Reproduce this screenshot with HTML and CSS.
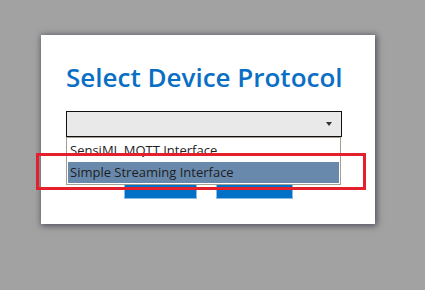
FILE: index.html
```html
<!DOCTYPE html>
<html>
<head>
<meta charset="utf-8">
<link rel="stylesheet" href="styles.css">
</head>
<body>
<div class="dialog">
  <h1 class="title">Select Device Protocol</h1>
  <div class="field">
    <div class="select"><span class="arrow"></span></div>
    <ul class="listbox">
      <li class="option">SensiML MQTT Interface</li>
      <li class="option selected">Simple Streaming Interface</li>
    </ul>
  </div>
  <div class="buttons">
    <button class="btn btn-ok">Select</button>
    <button class="btn btn-cancel">Cancel</button>
  </div>
</div>
<div class="highlight-box"></div>
</body>
</html>
```
FILE: styles.css
```css
html, body {
  margin: 0;
  padding: 0;
}
body {
  background: #a2a2a2;
  width: 425px;
  height: 290px;
  overflow: hidden;
  position: relative;
  font-family: "Open Sans", "Noto Sans", sans-serif;
}
.dialog {
  margin: 35px 0 0 41px;
  width: 334px;
  height: 189px;
  background: #ffffff;
  box-shadow: 1px 1px 6px 1px rgba(40, 40, 60, 0.65);
  box-sizing: border-box;
  padding: 24px 0 0 25px;
}
.title {
  margin: 0;
  font-size: 26px;
  font-weight: 600;
  line-height: 36px;
  color: #0a6fc4;
  white-space: nowrap;
}
.field {
  position: relative;
  margin-top: 16px;
  width: 276px;
}
.select {
  height: 26px;
  box-sizing: border-box;
  border: 1px solid #111;
  background: #e9e9e9;
  position: relative;
}
.arrow {
  position: absolute;
  right: 9px;
  top: 10px;
  width: 0;
  height: 0;
  border-left: 3.5px solid transparent;
  border-right: 3.5px solid transparent;
  border-top: 4px solid #333;
}
.listbox {
  position: absolute;
  left: 0;
  top: 26px;
  width: 275px;
  height: 48px;
  margin: 0;
  padding: 1px;
  box-sizing: border-box;
  list-style: none;
  background: #fff;
  border: 1px solid #a39d92;
  z-index: 2;
}
.option {
  height: 22px;
  line-height: 22px;
  font-size: 13px;
  color: #1e1e1e;
  padding-left: 2px;
  white-space: nowrap;
}
.option:first-child {
  height: 23px;
  line-height: 22px;
}
.option.selected {
  background: #6889ac;
  height: 21px;
  line-height: 21px;
}
.buttons {
  display: flex;
  justify-content: center;
  gap: 19px;
  margin-top: 32px;
  padding-right: 25px;
}
.btn {
  height: 30px;
  border: 1px solid #8cbbe6;
  background: #0071c6;
  color: #fff;
  font-family: "Open Sans", sans-serif;
  font-size: 13px;
  line-height: 20px;
  padding: 0 0 8px 0;
  display: flex;
  align-items: flex-start;
  justify-content: center;
}
.btn-ok { width: 73px; }
.btn-cancel { width: 77px; }
.highlight-box {
  position: absolute;
  left: 36px;
  top: 153px;
  width: 330px;
  height: 37px;
  box-sizing: border-box;
  border: 3px solid #e3202c;
  z-index: 3;
}
```
